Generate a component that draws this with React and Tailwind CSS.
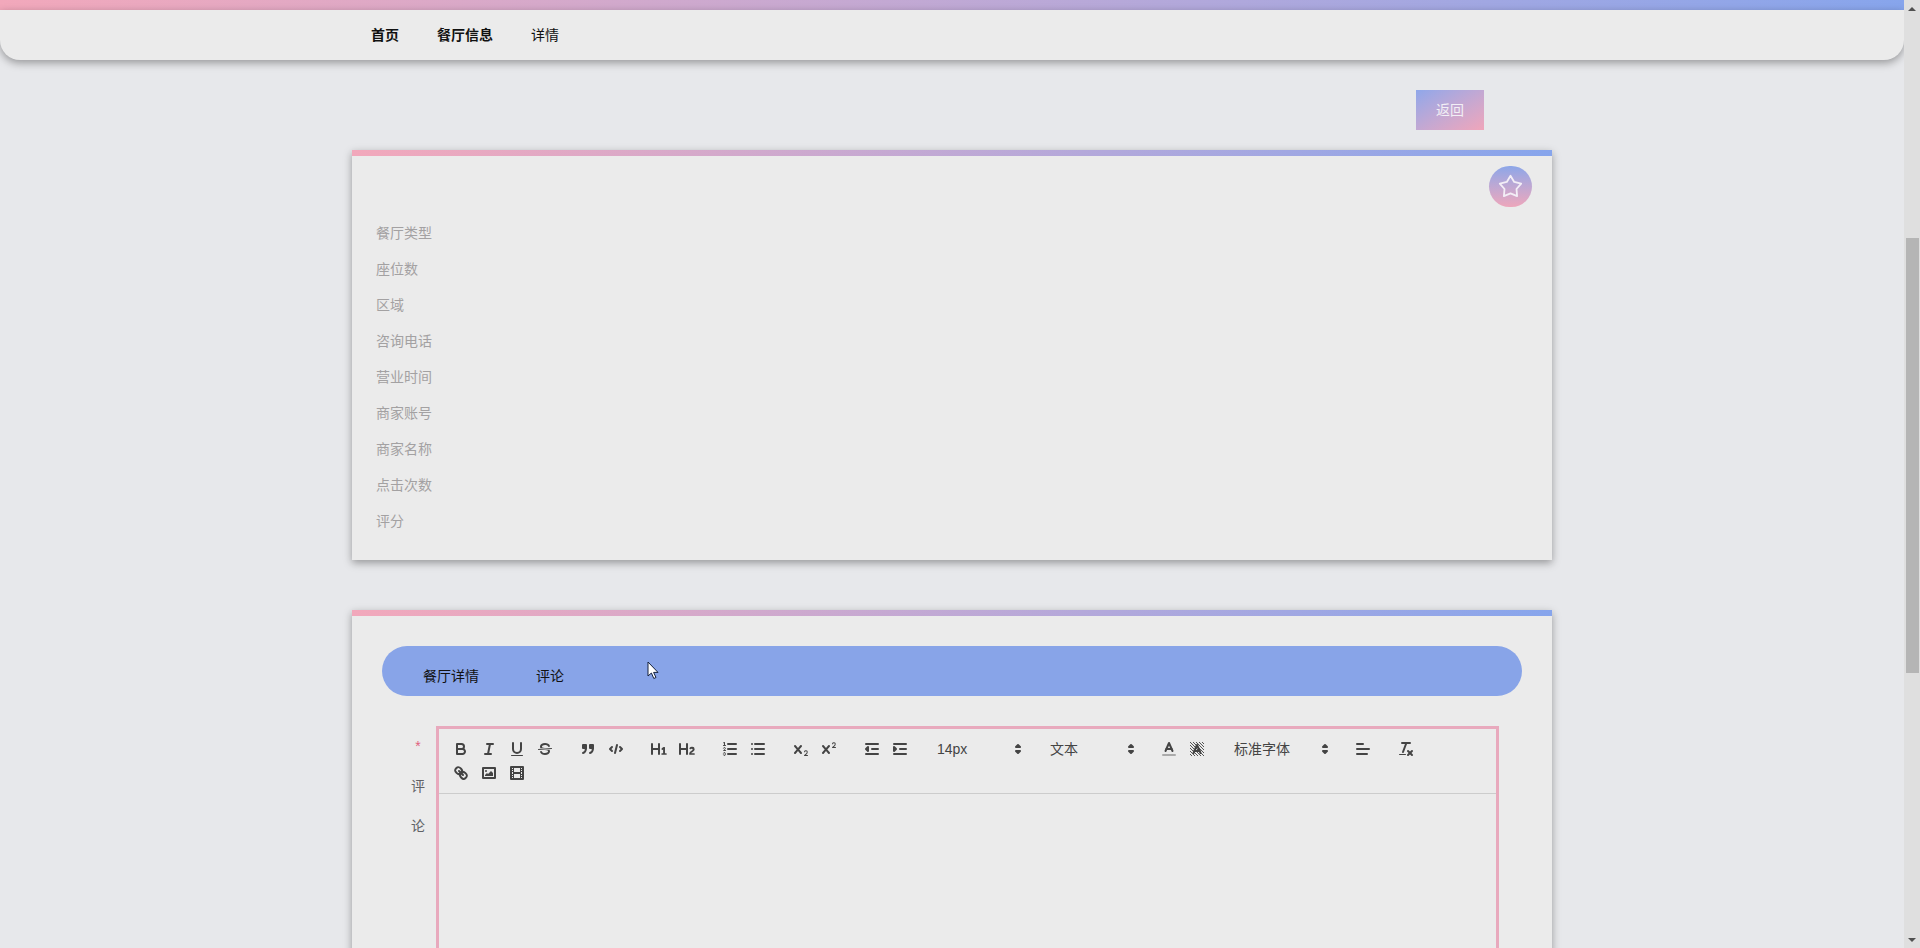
const fontStack = "font-['Liberation_Sans','Noto_Sans_CJK_SC',sans-serif]";
const infoLabels = ["餐厅类型", "座位数", "区域", "咨询电话", "营业时间", "商家账号", "商家名称", "点击次数", "评分"];

function Line(props) {
    return <line fill="none" stroke="#444" strokeWidth="2" strokeLinecap="round" strokeLinejoin="round" {...props} />;
}
function Stroke(props) {
    return <path fill="none" stroke="#444" strokeWidth="2" strokeLinecap="round" strokeLinejoin="round" {...props} />;
}
function Fill(props) {
    return <path fill="#444" {...props} />;
}

const icons = {
    bold: <>
        <Stroke d="M5,4H9.5A2.5,2.5,0,0,1,12,6.5v0A2.5,2.5,0,0,1,9.5,9H5V4Z" />
        <Stroke d="M5,9h5.5A2.5,2.5,0,0,1,13,11.5v0A2.5,2.5,0,0,1,10.5,14H5V9Z" />
    </>,
    italic: <>
        <Line x1="7" x2="13" y1="4" y2="4" />
        <Line x1="5" x2="11" y1="14" y2="14" />
        <Line x1="8" x2="10" y1="14" y2="4" />
    </>,
    underline: <>
        <Stroke d="M5,3V9a4.012,4.012,0,0,0,4,4H9a4.012,4.012,0,0,0,4-4V3" />
        <rect fill="#444" height="1" rx="0.5" ry="0.5" width="12" x="3" y="15" />
    </>,
    strike: <>
        <Line strokeWidth="1" x1="15.5" x2="2.5" y1="8.5" y2="9.5" />
        <Fill d="M9.007,8C6.542,7.791,6,7.519,6,6.5,6,5.792,7.283,5,9,5c1.571,0,2.765.679,2.969,1.309a1,1,0,0,0,1.9-.617C13.356,4.106,11.354,3,9,3,6.2,3,4,4.538,4,6.5a3.2,3.2,0,0,0,.5,1.843Z" />
        <Fill d="M8.984,10C11.457,10.208,12,10.479,12,11.5c0,.708-1.283,1.5-3,1.5-1.571,0-2.765-.679-2.969-1.309a1,1,0,1,0-1.9.617C4.644,13.894,6.646,15,9,15c2.8,0,5-1.538,5-3.5a3.2,3.2,0,0,0-.5-1.843Z" />
    </>,
    quote: <>
        <rect fill="#444" stroke="#444" strokeWidth="2" strokeLinejoin="round" height="3" width="3" x="4" y="5" />
        <rect fill="#444" stroke="#444" strokeWidth="2" strokeLinejoin="round" height="3" width="3" x="11" y="5" />
        <Stroke d="M7,8c0,4.031-3,5-3,5" />
        <Stroke d="M14,8c0,4.031-3,5-3,5" />
    </>,
    code: <>
        <Stroke d="M5 7L3 9L5 11" />
        <Stroke d="M13 7L15 9L13 11" />
        <Line x1="10" x2="8" y1="5" y2="13" />
    </>,
    h1: <Fill d="M10,4V14a1,1,0,0,1-2,0V10H3v4a1,1,0,0,1-2,0V4A1,1,0,0,1,3,4V8H8V4a1,1,0,0,1,2,0Zm6.06787,9.209H14.98975V7.59863a.54085.54085,0,0,0-.605-.60547h-.62744a1.01119,1.01119,0,0,0-.748.29688L11.645,8.56641a.5435.5435,0,0,0-.022.8584l.28613.30762a.53861.53861,0,0,0,.84717.0332l.09912-.08789a1.2137,1.2137,0,0,0,.2417-.35254h.02246s-.01123.30859-.01123.60547V13.209H12.041a.54085.54085,0,0,0-.605.60547v.43945a.54085.54085,0,0,0,.605.60547h4.02686a.54085.54085,0,0,0,.605-.60547v-.43945A.54085.54085,0,0,0,16.06787,13.209Z" />,
    h2: <Fill d="M16.73975,13.81445v.43945a.54085.54085,0,0,1-.605.60547H11.855a.58392.58392,0,0,1-.64893-.60547V14.0127c0-2.90527,3.39941-3.42187,3.39941-4.55469a.77675.77675,0,0,0-.84717-.78125,1.17684,1.17684,0,0,0-.83594.38477c-.2749.26367-.561.374-.85791.13184l-.4292-.34082c-.30811-.24219-.38525-.51758-.1543-.81445a2.97155,2.97155,0,0,1,2.45361-1.17676,2.45393,2.45393,0,0,1,2.68408,2.40918c0,2.45312-3.1792,2.92676-3.27832,3.93848h2.79443A.54085.54085,0,0,1,16.73975,13.81445ZM9,3A.99974.99974,0,0,0,8,4V8H3V4A1,1,0,0,0,1,4V14a1,1,0,0,0,2,0V10H8v4a1,1,0,0,0,2,0V4A.99974.99974,0,0,0,9,3Z" />,
    ol: <>
        <Line x1="7" x2="15" y1="4" y2="4" />
        <Line x1="7" x2="15" y1="9" y2="9" />
        <Line x1="7" x2="15" y1="14" y2="14" />
        <Line strokeWidth="1" x1="2.5" x2="4.5" y1="5.5" y2="5.5" />
        <Fill d="M3.5,6A0.5,0.5,0,0,1,3,5.5V3.085l-0.276.138A0.5,0.5,0,0,1,2.053,3c-0.124-.247-0.023-0.324.224-0.447l1-.5A0.5,0.5,0,0,1,4,2.5v3A0.5,0.5,0,0,1,3.5,6Z" />
        <Stroke strokeWidth="1" d="M4.5,10.5h-2c0-.234,1.85-1.076,1.85-2.234A0.959,0.959,0,0,0,2.5,8.156" />
        <Stroke strokeWidth="1" d="M2.5,14.846a0.959,0.959,0,0,0,1.85-.109A0.7,0.7,0,0,0,3.75,14a0.688,0.688,0,0,0,.6-0.736,0.959,0.959,0,0,0-1.85-.109" />
    </>,
    ul: <>
        <Line x1="6" x2="15" y1="4" y2="4" />
        <Line x1="6" x2="15" y1="9" y2="9" />
        <Line x1="6" x2="15" y1="14" y2="14" />
        <Line x1="3" x2="3" y1="4" y2="4" />
        <Line x1="3" x2="3" y1="9" y2="9" />
        <Line x1="3" x2="3" y1="14" y2="14" />
    </>,
    sub: <>
        <Fill d="M15.5,15H13.861a3.858,3.858,0,0,0,1.914-2.975,1.8,1.8,0,0,0-1.6-1.751A1.921,1.921,0,0,0,12.021,11.7a0.50013,0.50013,0,1,0,.957.291h0a0.914,0.914,0,0,1,1.053-.725,0.81,0.81,0,0,1,.744.762c0,1.076-1.16971,1.86982-1.93971,2.43082A1.45639,1.45639,0,0,0,12,15.5a0.5,0.5,0,0,0,.5.5h3A0.5,0.5,0,0,0,15.5,15Z" />
        <Fill d="M9.65,5.241a1,1,0,0,0-1.409.108L6,7.964,3.759,5.349A1,1,0,0,0,2.192,6.59178Q2.21541,6.6213,2.241,6.649L4.684,9.5,2.241,12.35A1,1,0,0,0,3.71,13.70722q0.02557-.02768.049-0.05722L6,11.036,8.241,13.65a1,1,0,1,0,1.567-1.24277Q9.78459,12.3777,9.759,12.35L7.316,9.5,9.759,6.651A1,1,0,0,0,9.65,5.241Z" />
    </>,
    sup: <>
        <Fill d="M15.5,7H13.861a4.015,4.015,0,0,0,1.914-2.975,1.8,1.8,0,0,0-1.6-1.751A1.922,1.922,0,0,0,12.021,3.7a0.5,0.5,0,1,0,.957.291,0.917,0.917,0,0,1,1.053-.725,0.81,0.81,0,0,1,.744.762c0,1.077-1.164,1.925-1.934,2.486A1.423,1.423,0,0,0,12,7.5a0.5,0.5,0,0,0,.5.5h3A0.5,0.5,0,0,0,15.5,7Z" />
        <Fill d="M9.651,5.241a1,1,0,0,0-1.41.108L6,7.964,3.759,5.349a1,1,0,1,0-1.519,1.3L4.683,9.5,2.241,12.35a1,1,0,1,0,1.519,1.3L6,11.036l2.241,2.615a1,1,0,0,0,1.519-1.3L7.317,9.5,9.759,6.651A1,1,0,0,0,9.651,5.241Z" />
    </>,
    outdent: <>
        <Line x1="3" x2="15" y1="14" y2="14" />
        <Line x1="3" x2="15" y1="4" y2="4" />
        <Line x1="9" x2="15" y1="9" y2="9" />
        <Stroke d="M5 7L5 11L3 9L5 7Z" fill="#444" />
    </>,
    indent: <>
        <Line x1="3" x2="15" y1="14" y2="14" />
        <Line x1="3" x2="15" y1="4" y2="4" />
        <Line x1="9" x2="15" y1="9" y2="9" />
        <Stroke d="M3 7L3 11L5 9L3 7Z" fill="#444" />
    </>,
    color: <>
        <Line stroke="#aaa" x1="3" x2="15" y1="15" y2="15" />
        <Stroke d="M5.5 11L9 3L12.5 11" />
        <Line x1="11.63" x2="6.38" y1="9" y2="9" />
    </>,
    background: <>
        <pattern id="dither" width="3" height="3" patternUnits="userSpaceOnUse" x="2" y="2">
            <rect width="1" height="1" fill="#555" />
            <rect x="1" y="1" width="1" height="1" fill="#555" />
            <rect x="2" y="2" width="1" height="1" fill="#555" />
        </pattern>
        <rect x="2" y="2" width="14" height="14" fill="url(#dither)" shapeRendering="crispEdges" />
        <Stroke d="M5.5 13L9 5L12.5 13" />
        <Line x1="11.63" x2="6.38" y1="11" y2="11" />
    </>,
    align: <>
        <Line x1="3" x2="15" y1="9" y2="9" />
        <Line x1="3" x2="13" y1="14" y2="14" />
        <Line x1="3" x2="9" y1="4" y2="4" />
    </>,
    clean: <>
        <Line x1="5" x2="13" y1="3" y2="3" />
        <Line x1="6" x2="9.35" y1="12" y2="3" />
        <Line x1="11" x2="15" y1="11" y2="15" />
        <Line x1="15" x2="11" y1="11" y2="15" />
        <rect fill="#444" height="1" rx="0.5" ry="0.5" width="7" x="2" y="14" />
    </>,
    link: <>
        <Line x1="7" x2="11" y1="7" y2="11" />
        <Stroke d="M8.9,4.577a3.476,3.476,0,0,1,.36,4.679A3.476,3.476,0,0,1,4.577,8.9C3.185,7.5,2.035,6.4,4.217,4.217S7.5,3.185,8.9,4.577Z" />
        <Stroke d="M13.423,9.1a3.476,3.476,0,0,0-4.679-.36,3.476,3.476,0,0,0,.36,4.679c1.392,1.392,2.5,2.542,4.679.36S14.815,10.5,13.423,9.1Z" />
    </>,
    image: <>
        <rect fill="none" stroke="#444" strokeWidth="2" strokeLinejoin="round" height="10" width="12" x="3" y="4" />
        <circle fill="#444" cx="6" cy="7" r="1" />
        <polygon fill="#444" points="5 12 5 11 7 9 8 10 11 7 13 9 13 12 5 12" />
    </>,
    video: <>
        <rect fill="none" stroke="#444" strokeWidth="2" strokeLinejoin="round" height="12" width="12" x="3" y="3" />
        <rect fill="#444" height="12" width="1" x="5" y="3" />
        <rect fill="#444" height="12" width="1" x="12" y="3" />
        <rect fill="#444" height="2" width="8" x="5" y="8" />
        <rect fill="#444" height="1" width="3" x="3" y="5" />
        <rect fill="#444" height="1" width="3" x="3" y="7" />
        <rect fill="#444" height="1" width="3" x="3" y="10" />
        <rect fill="#444" height="1" width="3" x="3" y="12" />
        <rect fill="#444" height="1" width="3" x="12" y="5" />
        <rect fill="#444" height="1" width="3" x="12" y="7" />
        <rect fill="#444" height="1" width="3" x="12" y="10" />
        <rect fill="#444" height="1" width="3" x="12" y="12" />
    </>,
};

function ToolButton({ name }) {
    return (
        <button type="button" className="w-7 h-6 px-[5px] py-[3px] bg-transparent">
            <svg viewBox="0 0 18 18" className="w-[18px] h-[18px]">{icons[name]}</svg>
        </button>
    );
}

function ToolGroup({ names }) {
    return (
        <span className="flex mr-[15px]">
            {names.map(n => <ToolButton key={n} name={n} />)}
        </span>
    );
}

function Picker({ label, width }) {
    return (
        <span className={`relative flex items-center h-6 pl-2 mr-[15px] text-sm text-[#444] ${width}`}>
            {label}
            <svg viewBox="0 0 18 18" className="absolute right-0 top-[3px] w-[18px] h-[18px]">
                <polygon fill="none" stroke="#444" strokeWidth="2" strokeLinejoin="round" points="7 11 9 13 11 11 7 11" />
                <polygon fill="none" stroke="#444" strokeWidth="2" strokeLinejoin="round" points="7 7 9 5 11 7 7 7" />
            </svg>
        </span>
    );
}

function Toolbar() {
    return (
        <div className="flex flex-wrap pt-2 pb-2 pl-2 border-b border-[#ccc]">
            <ToolGroup names={["bold", "italic", "underline", "strike"]} />
            <ToolGroup names={["quote", "code"]} />
            <ToolGroup names={["h1", "h2"]} />
            <ToolGroup names={["ol", "ul"]} />
            <ToolGroup names={["sub", "sup"]} />
            <ToolGroup names={["outdent", "indent"]} />
            <Picker label="14px" width="w-[98px]" />
            <Picker label="文本" width="w-[98px]" />
            <ToolGroup names={["color", "background"]} />
            <Picker label="标准字体" width="w-[108px]" />
            <ToolGroup names={["align"]} />
            <ToolGroup names={["clean"]} />
            <ToolGroup names={["link", "image", "video"]} />
        </div>
    );
}

export default function App() {
    return (
        <div className={`relative flex h-[948px] overflow-hidden bg-[#e7e8eb] text-sm ${fontStack}`}>
            <div className="flex-1 min-w-0">
                {/* Header */}
                <div className="h-[10px] bg-gradient-to-r from-[#f2a8bb] to-[#87a5ec]" />
                <nav className="flex items-center h-[50px] pl-[371px] gap-[38px] pb-[1px] bg-[#ebebeb] rounded-b-[20px] shadow-[0_3px_8px_rgba(0,0,0,0.35)] text-[#111]">
                    <span className="font-bold">首页</span>
                    <span className="font-bold">餐厅信息</span>
                    <span>详情</span>
                </nav>

                <div className="w-[1200px] mx-auto">
                    <div className="flex justify-end pr-[68px] pt-[30px]">
                        <button type="button" className="w-[68px] h-10 bg-gradient-to-br from-[#8fa7ea] to-[#f0a5ba] text-[#f2eff5]">返回</button>
                    </div>

                    {/* Info card */}
                    <section className="relative mt-5 h-[410px] bg-[#ebebeb] shadow-[0_3px_8px_rgba(0,0,0,0.35)]">
                        <div className="h-[6px] bg-gradient-to-r from-[#f2a8bb] to-[#87a5ec]" />
                        <button type="button" className="absolute top-4 right-[20px] flex items-center justify-center w-[43px] h-[41px] rounded-full bg-gradient-to-b from-[#8ca6e8] to-[#eda6bb]">
                            <svg viewBox="0 0 24 24" className="w-[27px] h-[27px]">
                                <polygon fill="none" stroke="#f3eef6" strokeWidth="1.6" strokeLinejoin="round" points="12,2.5 15.29,7.97 21.51,9.41 17.33,14.23 17.88,20.59 12,18.1 6.12,20.59 6.67,14.23 2.49,9.41 8.71,7.97" />
                            </svg>
                        </button>
                        <div className="pt-[59px] pl-6">
                            {infoLabels.map(label => (
                                <div key={label} className="leading-9 text-[#a3a1a2]">{label}</div>
                            ))}
                        </div>
                    </section>

                    {/* Tabs and comment editor */}
                    <section className="mt-[50px] h-[600px] bg-[#ebebeb] shadow-[0_3px_8px_rgba(0,0,0,0.35)]">
                        <div className="h-[6px] bg-gradient-to-r from-[#f2a8bb] to-[#87a5ec]" />
                        <div className="px-[30px] pt-[30px]">
                            <div className="flex h-[50px] pl-[41px] pt-[10px] gap-[57px] leading-10 rounded-[25px] bg-[#88a4e8] text-[#111]">
                                <span>餐厅详情</span>
                                <span>评论</span>
                            </div>
                            <div className="flex mt-[30px]">
                                <label className="w-[14px] ml-[29px] mr-[11px] text-center leading-10 text-[#606266]">
                                    <span className="text-[#e0607e]">*</span>评论
                                </label>
                                <div className="w-[1063px] h-[400px] border-[3px] border-[#e8a9bd]">
                                    <Toolbar />
                                </div>
                            </div>
                        </div>
                    </section>
                </div>
            </div>

            {/* Scrollbar */}
            <div className="flex flex-col items-center w-4 bg-[#dfdfdf]">
                <div className="flex items-center justify-center h-[17px]">
                    <div className="w-0 h-0 border-x-[4px] border-x-transparent border-b-[4px] border-b-[#505050]" />
                </div>
                <div className="w-[13px] h-[435px] mt-[221px] bg-[#b5b5b5]" />
                <div className="flex-1" />
                <div className="flex items-center justify-center h-[17px]">
                    <div className="w-0 h-0 border-x-[4px] border-x-transparent border-t-[4px] border-t-[#505050]" />
                </div>
            </div>

            {/* Mouse pointer */}
            <svg viewBox="0 0 13 19" className="absolute left-[647px] top-[661px] w-[13px] h-[19px]">
                <path d="M1 1V15L4.4 12L6.8 17.5L9 16.5L6.6 11.4H11Z" fill="#fff" stroke="#14213d" strokeWidth="1" strokeLinejoin="round" />
            </svg>
        </div>
    );
}
